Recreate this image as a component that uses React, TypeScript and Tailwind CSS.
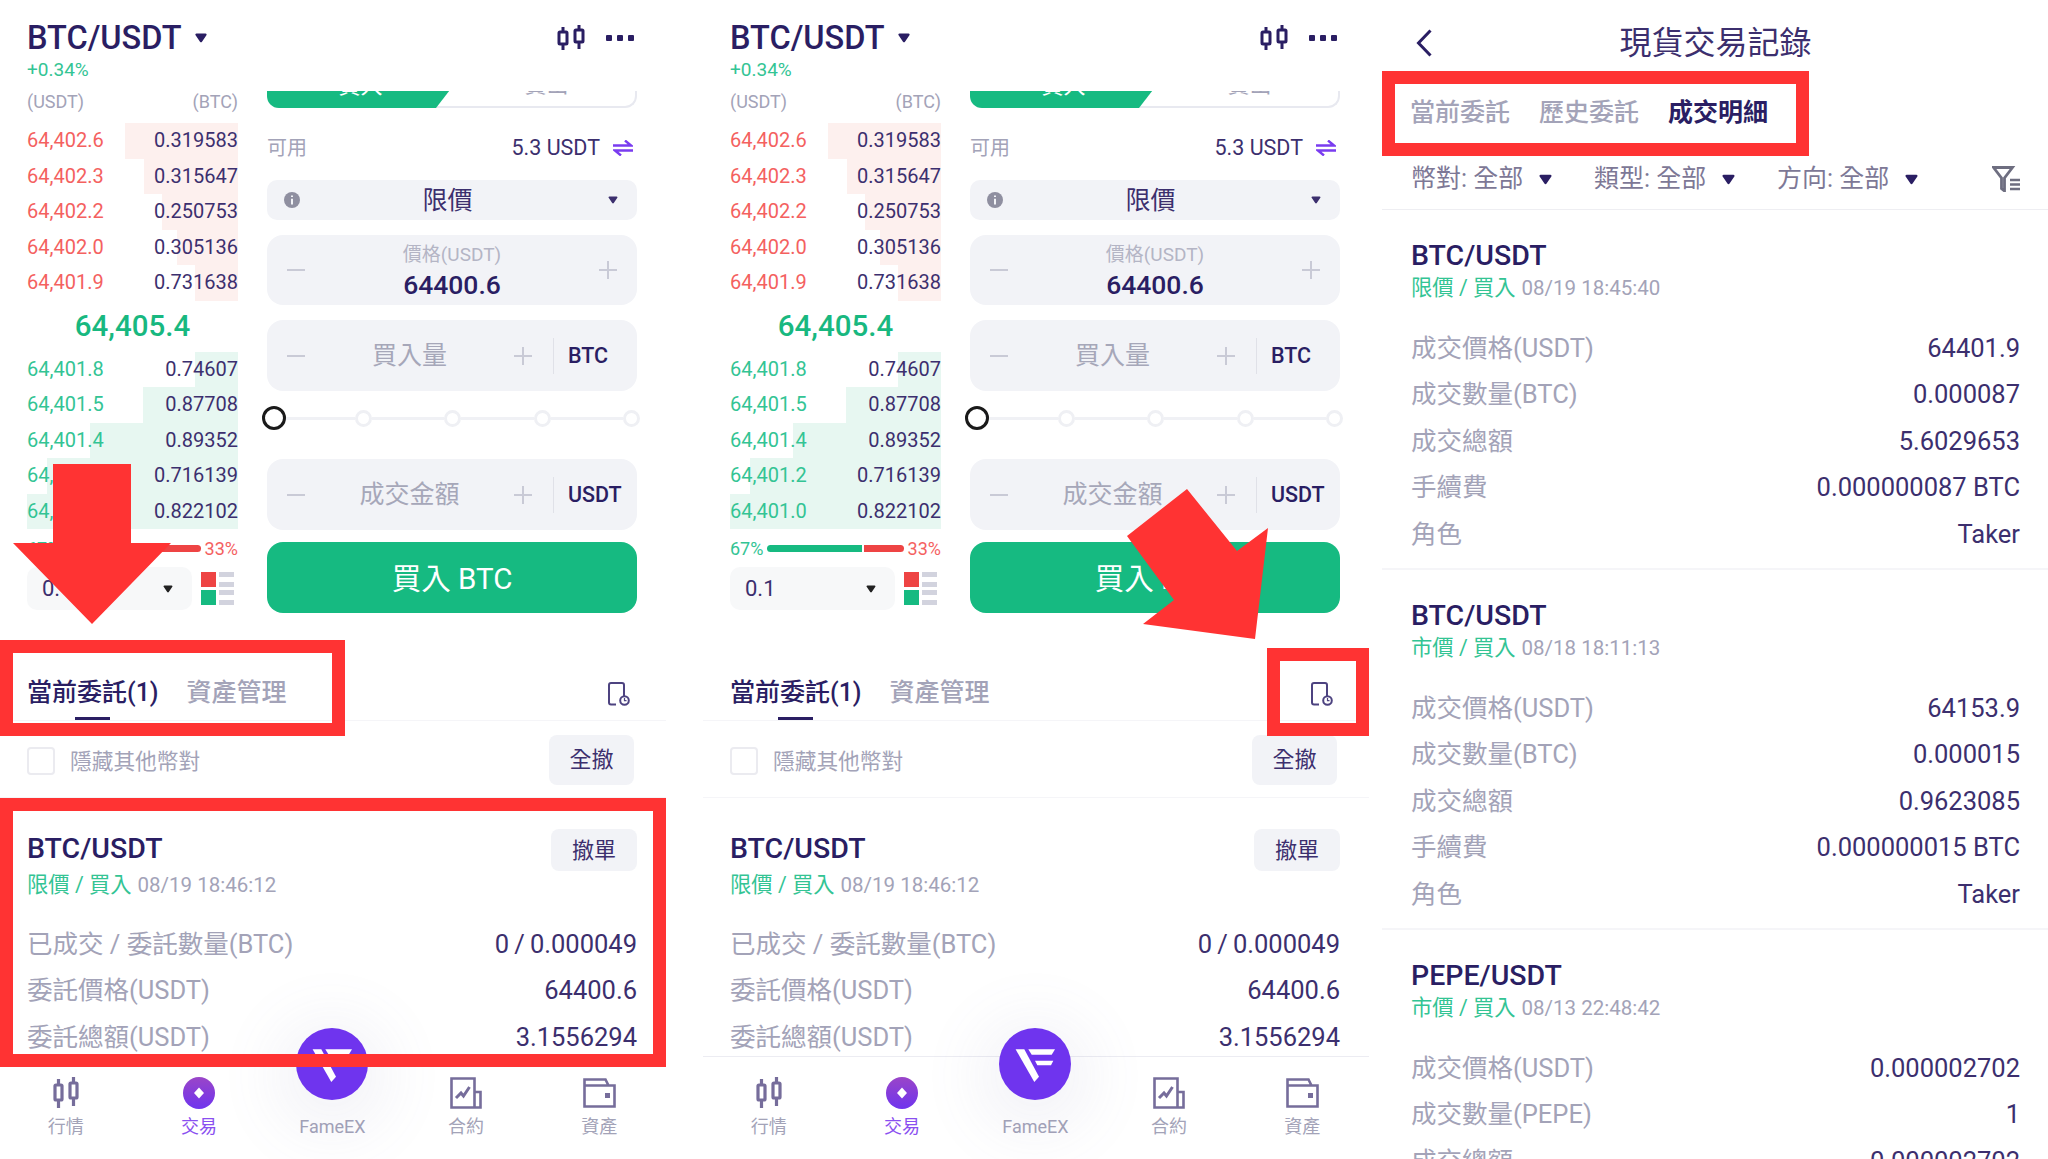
import React from 'react'

const asks = [
  { price: '64,402.6', qty: '0.319583', depth: 113 },
  { price: '64,402.3', qty: '0.315647', depth: 94 },
  { price: '64,402.2', qty: '0.250753', depth: 76 },
  { price: '64,402.0', qty: '0.305136', depth: 61 },
  { price: '64,401.9', qty: '0.731638', depth: 43 },
]

const bids = [
  { price: '64,401.8', qty: '0.74607', depth: 43 },
  { price: '64,401.5', qty: '0.87708', depth: 95 },
  { price: '64,401.4', qty: '0.89352', depth: 148 },
  { price: '64,401.2', qty: '0.716139', depth: 191 },
  { price: '64,401.0', qty: '0.822102', depth: 211 },
]

const trades = [
  {
    pair: 'BTC/USDT',
    kind: '限價 / 買入',
    time: '08/19 18:45:40',
    rows: [
      ['成交價格(USDT)', '64401.9'],
      ['成交數量(BTC)', '0.000087'],
      ['成交總額', '5.6029653'],
      ['手續費', '0.000000087 BTC'],
      ['角色', 'Taker'],
    ],
  },
  {
    pair: 'BTC/USDT',
    kind: '市價 / 買入',
    time: '08/18 18:11:13',
    rows: [
      ['成交價格(USDT)', '64153.9'],
      ['成交數量(BTC)', '0.000015'],
      ['成交總額', '0.9623085'],
      ['手續費', '0.000000015 BTC'],
      ['角色', 'Taker'],
    ],
  },
  {
    pair: 'PEPE/USDT',
    kind: '市價 / 買入',
    time: '08/13 22:48:42',
    rows: [
      ['成交價格(USDT)', '0.000002702'],
      ['成交數量(PEPE)', '1'],
      ['成交總額', '0.000002702'],
    ],
  },
]

const Caret = ({ className }: { className: string }) => (
  <svg viewBox="0 0 12 10" className={className} fill="currentColor">
    <path d="M1.5 0.5h9c1 0 1.4 1 .9 1.7L7 8.8c-.5.7-1.5.7-2 0L.6 2.2C.1 1.5.5.5 1.5.5z" />
  </svg>
)

const CandleIcon = ({ className }: { className: string }) => (
  <svg viewBox="0 0 28 26" className={className} fill="none" stroke="currentColor" strokeWidth="3">
    <rect x="2" y="7" width="8" height="12" rx="1" />
    <rect x="18" y="5" width="8" height="12" rx="1" />
    <path d="M6 2v5M6 19v6M22 0v5M22 17v7" />
  </svg>
)

const StepButton = ({ sign }: { sign: '-' | '+' }) => (
  <svg viewBox="0 0 18 18" className="w-[18px] h-[18px] text-[#c9cad6]" stroke="currentColor" strokeWidth="2" fill="none">
    <path d="M0 9h18" />
    {sign === '+' && <path d="M9 0v18" />}
  </svg>
)

const AmountInput = ({ label, unit }: { label: string; unit: string }) => (
  <div className="h-[71px] rounded-[16px] bg-[#f2f3f7] flex items-center pl-[20px]">
    <StepButton sign="-" />
    <span className="flex-1 pt-[1px] text-center text-[25px] text-[#a6a7b9]">{label}</span>
    <StepButton sign="+" />
    <div className="h-[36px] w-px bg-[#e0e1e8] ml-[21px]" />
    <span className="w-[83px] pl-[14px] pt-[1px] text-[21.5px] font-medium text-[#2a1e63]">{unit}</span>
  </div>
)

const BookRow = ({ row, color, bar }: { row: (typeof asks)[number]; color: string; bar: string }) => (
  <div className="relative h-[35.5px] pb-[1px] flex items-center justify-between text-[20px]">
    <div className={`absolute right-0 top-0 bottom-0 ${bar}`} style={{ width: row.depth }} />
    <span className={`relative ${color}`}>{row.price}</span>
    <span className="relative text-[#3c2f6e]">{row.qty}</span>
  </div>
)

const OrderRow = ({ label, value }: { label: string; value: string }) => (
  <div className="h-[46.4px] flex items-center justify-between text-[25.5px]">
    <span className="text-[#a3a3b8]">{label}</span>
    <span className="text-[#3c2f6e]">{value}</span>
  </div>
)

const NavItem = ({ label, active, children }: { label: string; active?: boolean; children?: React.ReactNode }) => (
  <div className="flex flex-col items-center">
    <div className="h-[36px] flex items-center justify-center">{children}</div>
    <span className={`mt-[4px] text-[18px] leading-[24px] ${active ? 'text-[#8a4ff0]' : 'text-[#a3a3b8]'}`}>{label}</span>
  </div>
)

const TradePanel = ({ className, children }: { className: string; children?: React.ReactNode }) => (
  <div className={`relative h-[1159px] w-[666px] shrink-0 flex flex-col overflow-hidden ${className}`}>
    {/* header */}
    <div className="h-[91px] pt-[19px] pl-[27px] pr-[32px]">
      <div className="flex items-center justify-between h-[38px]">
        <div className="flex items-center gap-[13px]">
          <span className="text-[32.5px] font-medium text-[#2a1e63]">BTC/USDT</span>
          <Caret className="w-[12px] h-[10px] text-[#2a1e63]" />
        </div>
        <div className="flex items-center gap-[21px]">
          <CandleIcon className="w-[28px] h-[26px] text-[#2a1e63]" />
          <div className="flex gap-[5px]">
            <span className="w-[6px] h-[6px] rounded-[1px] bg-[#2a1e63]" />
            <span className="w-[6px] h-[6px] rounded-[1px] bg-[#2a1e63]" />
            <span className="w-[6px] h-[6px] rounded-[1px] bg-[#2a1e63]" />
          </div>
        </div>
      </div>
      <div className="mt-[1px] text-[19px] leading-[24px] text-[#33c494]">+0.34%</div>
    </div>

    <div className="flex h-[522px] pl-[27px]">
      {/* order book */}
      <div className="w-[211px]">
        <div className="flex justify-between h-[22px] mb-[10px] text-[18px] leading-[22px] text-[#a3a3b8]">
          <span>(USDT)</span>
          <span>(BTC)</span>
        </div>
        {asks.map((row) => (
          <BookRow key={row.price} row={row} color="text-[#f4615f]" bar="bg-[#fdf0ee]" />
        ))}
        <div className="h-[51px] flex items-center justify-center text-[29.5px] font-medium text-[#18b880]">64,405.4</div>
        {bids.map((row) => (
          <BookRow key={row.price} row={row} color="text-[#33c494]" bar="bg-[#e7f7f1]" />
        ))}
        <div className="h-[38px] flex items-center justify-between text-[18px]">
          <span className="text-[#33c494]">67%</span>
          <div className="flex w-[137px] h-[7px] gap-[2px]">
            <div className="w-[95px] rounded-l-full bg-[#16ba81]" />
            <div className="flex-1 rounded-r-full bg-[#ee4444]" />
          </div>
          <span className="text-[#f4615f]">33%</span>
        </div>
        <div className="flex items-center gap-[9px]">
          <div className="w-[165px] h-[43px] rounded-[10px] bg-[#f7f8f9] flex items-center justify-between pl-[15px] pr-[19px]">
            <span className="text-[22px] text-[#3c2f6e]">0.1</span>
            <Caret className="w-[10px] h-[8px] text-[#222222]" />
          </div>
          <div className="grid grid-cols-[15px_15px] gap-x-[3px] gap-y-[3px]">
            <div className="h-[15px] bg-[#ee4444]" />
            <div className="flex flex-col justify-between">
              <span className="h-[5px] bg-[#d2d3de]" />
              <span className="h-[5px] bg-[#d2d3de]" />
            </div>
            <div className="h-[15px] bg-[#16ba81]" />
            <div className="flex flex-col justify-between">
              <span className="h-[5px] bg-[#d2d3de]" />
              <span className="h-[5px] bg-[#d2d3de]" />
            </div>
          </div>
        </div>
      </div>

      {/* order form */}
      <div className="w-[370px] ml-[29px]">
        <div className="h-[17px] overflow-hidden flex flex-col justify-end">
          <div className="h-[44px] shrink-0 flex rounded-b-[12px] border-b-2 border-r-2 border-[#e8e9f0] text-[22px]">
            <div className="w-[203px] -mb-[2px] pr-[16px] pb-[2px] flex items-center justify-center rounded-bl-[12px] bg-[#16ba81] text-white [clip-path:polygon(0_0,100%_0,169px_100%,0_100%)]">
              買入
            </div>
            <div className="flex-1 pr-[12px] pb-[2px] flex items-center justify-center text-[#a3a3b8]">賣出</div>
          </div>
        </div>
        <div className="h-[30px] mt-[25px] flex items-center justify-between pr-[4px]">
          <span className="text-[20px] text-[#a3a3b8]">可用</span>
          <div className="flex items-center gap-[13px]">
            <span className="text-[21.5px] text-[#3c2f6e]">5.3 USDT</span>
            <svg viewBox="0 0 20 16" className="w-[20px] h-[16px] text-[#7a3cf0]" fill="none" stroke="currentColor" strokeWidth="2.4">
              <path d="M0 5.5h18L12 0.5M20 10.5H2L8 15.5" />
            </svg>
          </div>
        </div>
        <div className="relative h-[40px] mt-[17px] rounded-[10px] bg-[#f2f3f7] flex items-center justify-between pl-[17px] pr-[19px]">
          <svg viewBox="0 0 16 16" className="w-[16px] h-[16px]">
            <circle cx="8" cy="8" r="8" fill="#8f8fa0" />
            <path d="M8 3.5v1.6M8 6.8v5.6" stroke="#f2f3f7" strokeWidth="2" />
          </svg>
          <span className="mr-[13px] pt-[2px] text-[25px] text-[#3c2f6e]">限價</span>
          <Caret className="w-[10px] h-[8px] text-[#3c2f6e]" />
        </div>
        <div className="h-[70px] mt-[15px] rounded-[16px] bg-[#f2f3f7] flex items-center justify-between px-[20px]">
          <StepButton sign="-" />
          <div className="flex flex-col items-center pt-[2px]">
            <span className="text-[19px] leading-[26px] text-[#b4b5c5]">價格(USDT)</span>
            <span className="text-[26.5px] leading-[33px] font-medium text-[#2a1e63]">64400.6</span>
          </div>
          <StepButton sign="+" />
        </div>
        <div className="mt-[15px]">
          <AmountInput label="買入量" unit="BTC" />
        </div>
        {/* slider */}
        <div className="h-[68px] pt-[15px] flex items-start -ml-[1.5px] w-[374.5px]">
          <div className="flex items-center w-full">
            <span className="relative z-10 w-[24px] h-[24px] -mx-[3.5px] rounded-full border-[3.5px] border-[#1a1a1a] bg-white shrink-0" />
            {[0, 1, 2, 3].map((i) => (
              <React.Fragment key={i}>
                <span className="flex-1 h-[3px] bg-[#f0f1f5]" />
                <span className="w-[17px] h-[17px] rounded-full border-[3px] border-[#eff0f4] bg-white shrink-0" />
              </React.Fragment>
            ))}
          </div>
        </div>
        <AmountInput label="成交金額" unit="USDT" />
        <div className="h-[71px] mt-[12px] pt-[4px] rounded-[16px] bg-[#16ba81] flex items-center justify-center text-[29.5px] text-white">
          買入 BTC
        </div>
      </div>
    </div>

    {/* tabs */}
    <div className="h-[108px] shrink-0 flex items-end justify-between pl-[27px] pr-[36px] border-b border-[#f5f5f8]">
      <div className="flex gap-[28px]">
        <div className="flex flex-col items-center">
          <span className="mt-[1px] text-[25px] leading-[36px] font-medium text-[#2a1e63]">當前委託(1)</span>
          <span className="w-[35px] h-[3px] mt-[6px] bg-[#2a1e63]" />
        </div>
        <span className="mt-[1px] text-[25px] leading-[36px] font-medium text-[#a3a3b8]">資產管理</span>
      </div>
      <svg viewBox="0 0 22 24" className="w-[22px] h-[24px] mb-[14px] text-[#4d4380]" fill="none" stroke="currentColor" strokeWidth="2">
        <path d="M8 22.5H3a2 2 0 0 1-2-2V3a2 2 0 0 1 2-2h11a2 2 0 0 1 2 2v11" />
        <circle cx="16.5" cy="18.5" r="4.3" />
        <path d="M16.5 16v2.7h2" strokeWidth="1.2" />
      </svg>
    </div>
    <div className="h-[77px] shrink-0 flex items-center justify-between pl-[27px] pr-[32px] border-b border-[#f5f5f8]">
      <div className="flex items-center gap-[15px] pt-[5px]">
        <span className="w-[28px] h-[28px] rounded-[4px] border-2 border-[#ebebf0]" />
        <span className="pt-[1px] text-[21.7px] text-[#a3a3b8]">隱藏其他幣對</span>
      </div>
      <div className="w-[85px] h-[50px] mt-[1px] rounded-[8px] bg-[#f2f3f7] flex items-center justify-center text-[22px] text-[#3c2f6e]">全撤</div>
    </div>

    {/* open order */}
    <div className="flex-1 min-h-0 overflow-hidden pt-[31px] pl-[27px] pr-[29px]">
      <div className="h-[42px] flex items-start justify-between">
        <span className="mt-[3px] text-[28.5px] leading-[34px] font-medium text-[#2a1e63]">BTC/USDT</span>
        <div className="w-[86px] h-[42px] rounded-[8px] bg-[#f2f3f7] flex items-center justify-center text-[22px] text-[#3c2f6e]">撤單</div>
      </div>
      <div className="h-[28px] flex items-center gap-[6px]">
        <span className="text-[21.3px] text-[#33c494]">限價 / 買入</span>
        <span className="text-[20.5px] text-[#a3a3b8]">08/19 18:46:12</span>
      </div>
      <div className="mt-[22px]">
        <OrderRow label="已成交 / 委託數量(BTC)" value={'0\u2009/\u20090.000049'} />
        <OrderRow label="委託價格(USDT)" value="64400.6" />
        <OrderRow label="委託總額(USDT)" value="3.1556294" />
      </div>
    </div>

    {/* bottom nav */}
    <div className="h-[103px] shrink-0 grid grid-cols-5 pt-[18px] -ml-[1px] mr-[0px] border-t border-[#ececf2]">
      <NavItem label="行情">
        <svg viewBox="0 0 26 32" className="w-[26px] h-[32px] text-[#766d9b]" fill="none" stroke="currentColor" strokeWidth="3.2">
          <rect x="2" y="8" width="7" height="15" rx="1" />
          <rect x="17" y="6" width="7" height="15" rx="1" />
          <path d="M5.5 2v6M5.5 23v8M20.5 0v6M20.5 21v8" />
        </svg>
      </NavItem>
      <NavItem label="交易" active>
        <svg viewBox="0 0 32 32" className="w-[32px] h-[32px]">
          <defs>
            <linearGradient id="tradeGrad" x1="0" y1="0" x2="0" y2="1">
              <stop offset="0" stopColor="#9a45c8" />
              <stop offset="1" stopColor="#6f34ee" />
            </linearGradient>
          </defs>
          <circle cx="16" cy="16" r="16" fill="url(#tradeGrad)" />
          <path d="M16 10.5l5 5.5-5 5.5-5-5.5z" fill="#ffffff" />
        </svg>
      </NavItem>
      <NavItem label="FameEX" />
      <NavItem label="合約">
        <svg viewBox="0 0 32 32" className="w-[32px] h-[32px] text-[#766d9b]" fill="none" stroke="currentColor" strokeWidth="2.6">
          <path d="M24.5 30.5H1.5V1.5h23zM24.5 15h6v15.5h-6" />
          <path d="M6 21l5-5 2.5 3 6-9" strokeWidth="3" />
        </svg>
      </NavItem>
      <NavItem label="資產">
        <svg viewBox="0 0 33 30" className="w-[33px] h-[30px] text-[#766d9b]" fill="none" stroke="currentColor" strokeWidth="2.6">
          <path d="M1.5 28.5V1.5h21l3 6h6v21zM1.5 7.5h24" />
          <rect x="22" y="15" width="5" height="5" fill="currentColor" stroke="none" />
        </svg>
      </NavItem>
    </div>

    {/* floating logo */}
    <div className="absolute left-[296px] top-[1028px] w-[72px] h-[72px] rounded-full bg-[#6f34ee] shadow-[0_12px_60px_24px_rgba(120,110,170,0.08)]">
      <svg viewBox="0 0 72 72" className="w-[72px] h-[72px]" fill="#ffffff">
        <path d="M16.6 21.3h8.7L40 48.7 35.3 54z" />
        <path d="M29.3 21.3H56l-3.3 5.4H32.7z" />
        <path d="M36 32.7h18.3l-2.3 4.6H38.3z" />
      </svg>
    </div>
    {children}
  </div>
)

const App: React.FC = () => {
  return (
    <div className="flex w-[2048px] h-[1159px] overflow-hidden bg-white [font-family:Roboto,'Noto_Sans_CJK_TC',sans-serif]">
      <TradePanel className="mr-[37px]">
        <div className="absolute left-0 top-[640px] w-[345px] h-[96px] border-[13px] border-[#ff3333]" />
        <div className="absolute left-0 top-[798px] w-[666px] h-[269px] border-[13px] border-[#ff3333]" />
        <svg viewBox="0 0 158 160" className="absolute left-[13px] top-[464px] w-[158px] h-[160px]">
          <path d="M40 0h78v79h40L79 160 0 79h40z" fill="#ff3333" />
        </svg>
      </TradePanel>

      <TradePanel className="mr-[13px]">
        <div className="absolute left-[564px] top-[648px] w-[102px] h-[88px] border-[13px] border-[#ff3333]" />
        <svg viewBox="0 0 150 158" className="absolute left-[420px] top-[485px] w-[150px] h-[158px]">
          <path d="M64 4l50 62 31-23-13 111-112-15 31-24-47-64z" fill="#ff3333" />
        </svg>
      </TradePanel>

      {/* history screen */}
      <div className="relative h-[1159px] w-[666px] shrink-0 overflow-hidden">
        <div className="pt-[19px] pl-[29px] pr-[28px] pb-[12px] border-b border-[#eeeef2]">
          <div className="h-[44px] grid grid-cols-[1fr_auto_1fr] items-center">
            <svg viewBox="0 0 16 28" className="w-[16px] h-[28px] ml-[5px] text-[#2a1e63]" fill="none" stroke="currentColor" strokeWidth="3">
              <path d="M14.5 1.5L2.5 14l12 12.5" />
            </svg>
            <span className="text-[32px] text-[#3c2f6e]">現貨交易記錄</span>
          </div>
          <div className="h-[48px] mt-[26px] -ml-[1px] flex items-center gap-[29px] text-[25px]">
            <span className="font-medium text-[#a3a3b8]">當前委託</span>
            <span className="font-medium text-[#a3a3b8]">歷史委託</span>
            <span className="font-bold text-[#2a1e63]">成交明細</span>
          </div>
          <div className="h-[36px] mt-[24px] flex items-center text-[25px] text-[#7d7896]">
            {['幣對: 全部', '類型: 全部', '方向: 全部'].map((f) => (
              <div key={f} className="w-[183px] flex items-center gap-[16px]">
                <span>{f}</span>
                <Caret className="w-[13px] h-[11px] text-[#2a1e63]" />
              </div>
            ))}
            <svg viewBox="0 0 28 26" className="w-[28px] h-[26px] ml-auto text-[#6e6e80]" fill="none" stroke="currentColor" strokeWidth="2.8">
              <path d="M1.5 1.5h19l-8 10.5v13l-3-2.5V12z" />
              <path d="M18 14h10M18 18.5h10M18 23h10" strokeWidth="2.4" />
            </svg>
          </div>
        </div>
        {trades.map((t) => (
          <div key={t.time} className="h-[360px] pt-[29px] pl-[29px] pr-[28px] border-b-[2px] border-[#f5f5f8]">
            <div className="text-[28.5px] leading-[34px] font-medium text-[#2a1e63]">{t.pair}</div>
            <div className="h-[28px] mt-[1px] flex items-center gap-[6px]">
              <span className="text-[21.3px] text-[#33c494]">{t.kind}</span>
              <span className="text-[20.5px] text-[#a3a3b8]">{t.time}</span>
            </div>
            <div className="mt-[23px]">
              {t.rows.map(([label, value]) => (
                <OrderRow key={label} label={label} value={value} />
              ))}
            </div>
          </div>
        ))}
        <div className="absolute left-0 top-[71px] w-[427px] h-[85px] border-[13px] border-[#ff3333]" />
      </div>
    </div>
  )
}

export default App
